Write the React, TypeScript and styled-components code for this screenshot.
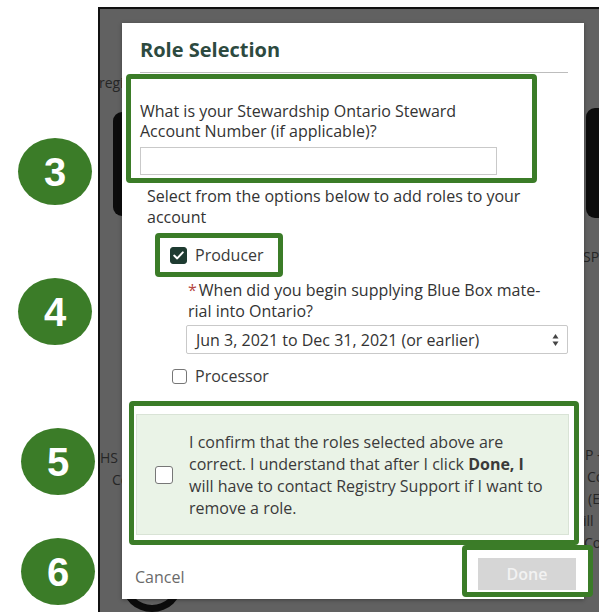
import styled, { createGlobalStyle } from 'styled-components';

const GREEN = '#3b7c28';

const GlobalStyle = createGlobalStyle`
	html, body {
		margin: 0;
		padding: 0;
		background: #fff;
	}
	* {
		box-sizing: border-box;
	}
`;

const Page = styled.div`
	display: flex;
	width: 599px;
	height: 612px;
	overflow: hidden;
	font-family: 'Open Sans', 'Noto Sans', sans-serif;
`;

const BadgeColumn = styled.div`
	display: flex;
	flex-direction: column;
	width: 98px;
	flex-shrink: 0;
`;

const Badge = styled.div<{ $top: number; $left: number }>`
	display: flex;
	align-items: center;
	justify-content: center;
	width: 74px;
	height: 67px;
	margin-top: ${({ $top }) => $top}px;
	margin-left: ${({ $left }) => $left}px;
	border-radius: 50%;
	background: ${GREEN};
	color: #fff;
	font-family: 'Liberation Sans', Arial, sans-serif;
	font-weight: 700;
	font-size: 40px;
	line-height: 1;
`;

const Screen = styled.div`
	position: relative;
	flex: 1;
	margin-top: 7px;
	border-top: 2px solid #111;
	border-left: 2px solid #111;
	background: #616161;
	overflow: hidden;
`;

// page behind the dialog, dimmed by the overlay
const Backdrop = styled.div`
	display: flex;
	justify-content: space-between;
	height: 100%;
	color: #262626;
	font-size: 14px;
	white-space: nowrap;
`;

const SideColumn = styled.div<{ $width: number }>`
	display: flex;
	flex-direction: column;
	width: ${({ $width }) => $width}px;
	flex-shrink: 0;
`;

const FaintText = styled.div<{ $top?: number; $left?: number }>`
	margin-top: ${({ $top = 0 }) => $top}px;
	margin-left: ${({ $left = 0 }) => $left}px;
	line-height: 22px;
`;

const Thumb = styled.div<{ $top: number; $left: number }>`
	width: 120px;
	height: 110px;
	margin-top: ${({ $top }) => $top}px;
	margin-left: ${({ $left }) => $left}px;
	border-radius: 9px;
	background: #0c0c0c;
`;

const Ring = styled.div`
	width: 60px;
	height: 60px;
	margin-top: 64px;
	margin-left: 22px;
	border: 7px solid #0c0c0c;
	border-radius: 50%;
`;

const Dialog = styled.div`
	position: absolute;
	left: 22px;
	top: 14px;
	width: 462px;
	height: 576px;
	display: flex;
	flex-direction: column;
	padding: 0 16px 0 18px;
	background: #fff;
	box-shadow: 0 1px 4px rgba(0, 0, 0, 0.35);
	color: #333;
	font-size: 16px;
`;

const Title = styled.h2`
	margin: 15px 0 0;
	font-size: 20px;
	line-height: 24px;
	font-weight: 700;
	color: #2d4a3f;
`;

const Rule = styled.hr`
	margin: 10px 0 0;
	border: none;
	border-top: 1px solid #bdbdbd;
`;

const Callout = styled.div<{ $left: number; $width: number; $top: number }>`
	margin-top: ${({ $top }) => $top}px;
	margin-left: ${({ $left }) => $left}px;
	width: ${({ $width }) => $width}px;
	border: 5px solid ${GREEN};
	border-radius: 4px;
`;

const AccountField = styled.div`
	padding: 22px 0 3px 9px;
	line-height: 20px;
`;

const TextInput = styled.div`
	width: 357px;
	height: 28px;
	margin-top: 6px;
	border: 1px solid #c9c9c9;
	background: #fff;
`;

const Paragraph = styled.p<{ $left: number; $top: number }>`
	margin: ${({ $top }) => $top}px 0 0 ${({ $left }) => $left}px;
	line-height: 21px;
`;

const Required = styled.span`
	color: #b5473f;
	margin-right: 2px;
`;

const CheckRow = styled.label<{ $pad: string }>`
	display: flex;
	align-items: center;
	gap: 8px;
	padding: ${({ $pad }) => $pad};
	line-height: 20px;
	color: #3a3a3a;
`;

const Box = styled.span<{ $size: number; $checked?: boolean }>`
	display: inline-flex;
	align-items: center;
	justify-content: center;
	width: ${({ $size }) => $size}px;
	height: ${({ $size }) => $size}px;
	border-radius: 3px;
	border: 1.5px solid ${({ $checked }) => ($checked ? '#1e3b31' : '#777')};
	background: ${({ $checked }) => ($checked ? '#1e3b31' : '#fff')};
	flex-shrink: 0;
`;

const Select = styled.div`
	display: flex;
	align-items: center;
	justify-content: space-between;
	width: 382px;
	height: 29px;
	margin: 3px 0 0 46px;
	padding: 0 8px 0 9px;
	border: 1px solid #c9c9c9;
	border-radius: 2px;
	color: #333;
`;

const ConfirmPanel = styled.div`
	display: flex;
	align-items: center;
	gap: 16px;
	margin: 8px 5px 5px 2px;
	padding: 16px 8px 15px 18px;
	background: #eaf3e7;
	border: 1px solid #d9e3d6;
	line-height: 22px;
	color: #3a3a3a;
`;

const Footer = styled.div`
	display: flex;
	justify-content: space-between;
	align-items: flex-start;
	margin: 0 -25px 0 -5px;
`;

const CancelLink = styled.span`
	margin-top: 22px;
	color: #6a6a6a;
	line-height: 20px;
`;

const DoneFrame = styled.div`
	width: 131px;
	height: 52px;
	padding: 8px 12px 2px 11px;
	border: 5px solid ${GREEN};
	border-radius: 4px;
	background: #fff;
`;

const DoneButton = styled.div`
	display: flex;
	align-items: center;
	justify-content: center;
	height: 100%;
	background: #d6d6d6;
	color: #f2f2f2;
	font-weight: 600;
`;

const Tick = () => (
	<svg width='11' height='9' viewBox='0 0 11 9'>
		<path d='M1.2 4.6 L4.2 7.4 L9.8 1.4' fill='none' stroke='#fff' strokeWidth='2' strokeLinecap='round' strokeLinejoin='round' />
	</svg>
);

const SelectArrows = () => (
	<svg width='7' height='14' viewBox='0 0 7 14'>
		<path d='M3.5 1 L6.5 5.5 L0.5 5.5 Z' fill='#444' />
		<path d='M3.5 13 L6.5 8.5 L0.5 8.5 Z' fill='#444' />
	</svg>
);

const App = () => {
	return (
		<>
			<GlobalStyle />
			<Page>
				<BadgeColumn>
					<Badge $top={138} $left={18}>3</Badge>
					<Badge $top={73} $left={18}>4</Badge>
					<Badge $top={83} $left={21}>5</Badge>
					<Badge $top={43} $left={21}>6</Badge>
				</BadgeColumn>

				<Screen>
					<Backdrop>
						<SideColumn $width={160}>
							<FaintText $top={63} $left={-1}>registration</FaintText>
							<Thumb $top={18} $left={13} />
							<FaintText $top={231}>HS Recycling</FaintText>
							<FaintText $left={12}>Co</FaintText>
							<Ring />
						</SideColumn>
						<SideColumn $width={16}>
							<Thumb $top={99} $left={3} />
							<FaintText $top={28}>SP</FaintText>
							<FaintText $top={176} $left={2}>P -</FaintText>
							<FaintText $left={4}>Co</FaintText>
							<FaintText $left={5}>(E</FaintText>
							<FaintText $left={0}>ill</FaintText>
							<FaintText $left={1}>Co</FaintText>
						</SideColumn>
					</Backdrop>

					<Dialog>
						<Title>Role Selection</Title>
						<Rule />

						<Callout $top={1} $left={-14} $width={411}>
							<AccountField>
								What is your Stewardship Ontario Steward
								<br />
								Account Number (if applicable)?
								<TextInput />
							</AccountField>
						</Callout>

						<Paragraph $top={3} $left={7}>
							Select from the options below to add roles to your
							<br />
							account
						</Paragraph>

						<Callout $top={5} $left={15} $width={128}>
							<CheckRow $pad='7px 0 7px 10px'>
								<Box $size={17} $checked>
									<Tick />
								</Box>
								Producer
							</CheckRow>
						</Callout>

						<Paragraph $top={3} $left={48}>
							<Required>*</Required>When did you begin supplying Blue Box mate-
							<br />
							rial into Ontario?
						</Paragraph>
						<Select>
							Jun 3, 2021 to Dec 31, 2021 (or earlier)
							<SelectArrows />
						</Select>

						<CheckRow $pad='12px 0 0 32px'>
							<Box $size={15} />
							Processor
						</CheckRow>

						<Callout $top={15} $left={-11} $width={450}>
							<ConfirmPanel>
								<Box $size={18} />
								<span>
									I confirm that the roles selected above are
									<br />
									correct. I understand that after I click <b>Done, I</b>
									<br />
									will have to contact Registry Support if I want to
									<br />
									remove a role.
								</span>
							</ConfirmPanel>
						</Callout>

						<Footer>
							<CancelLink>Cancel</CancelLink>
							<DoneFrame>
								<DoneButton>Done</DoneButton>
							</DoneFrame>
						</Footer>
					</Dialog>
				</Screen>
			</Page>
		</>
	);
};

export default App;
